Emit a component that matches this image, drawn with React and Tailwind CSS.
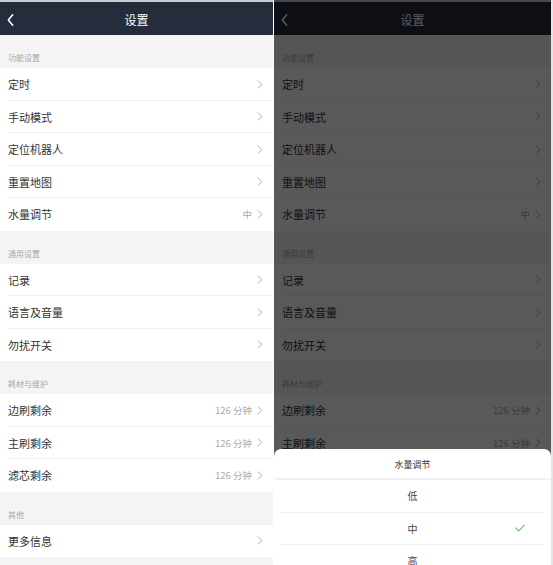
import React from 'react'

const font = { fontFamily: '"Noto Sans CJK SC", "Noto Sans", sans-serif' }

const sections = [
    {
        title: '功能设置',
        rows: [
            { label: '定时' },
            { label: '手动模式' },
            { label: '定位机器人' },
            { label: '重置地图' },
            { label: '水量调节', value: '中' },
        ],
    },
    {
        title: '通用设置',
        rows: [
            { label: '记录' },
            { label: '语言及音量' },
            { label: '勿扰开关' },
        ],
    },
    {
        title: '耗材与维护',
        rows: [
            { label: '边刷剩余', value: '126 分钟' },
            { label: '主刷剩余', value: '126 分钟' },
            { label: '滤芯剩余', value: '126 分钟' },
        ],
    },
    {
        title: '其他',
        rows: [{ label: '更多信息' }],
    },
]

const Chevron = ({ className }) => (
    <svg viewBox="0 0 6 10" className={className} fill="none" stroke="currentColor" strokeWidth="1.1" strokeLinecap="round" strokeLinejoin="round">
        <polyline points="1,1 5,5 1,9" />
    </svg>
)

const Screen = ({ width, headerBg }) => (
    <div className={`${width} h-full flex flex-col bg-[#f4f4f4] shrink-0`}>
        {/* header */}
        <div className={`h-[35px] shrink-0 ${headerBg} border-t-2 border-[#c9ccd2] relative flex items-center justify-center pt-[3px]`}>
            <svg viewBox="0 0 8 14" className="absolute left-[7px] top-[12px] w-[7px] h-[12px]" fill="none" stroke="white" strokeWidth="1.8" strokeLinecap="round" strokeLinejoin="round">
                <polyline points="6.5,1 1.5,7 6.5,13" />
            </svg>
            <span className="text-white text-[12px]">设置</span>
        </div>

        {sections.map(section => (
            <div key={section.title}>
                <div className="h-[33px] flex items-end pb-[4px] pl-[8px] text-[8px] text-[#a8a8a8]">
                    {section.title}
                </div>
                <div className="bg-white">
                    {section.rows.map((row, i) => (
                        <div key={row.label} className="h-[32.5px] pl-[8px] pr-[10px] flex items-center justify-between relative">
                            <span className="text-[11px] text-[#333]">{row.label}</span>
                            <span className="flex items-center gap-[5px] text-[#aaaaaa]">
                                {row.value && <span className="text-[9.5px]">{row.value}</span>}
                                <Chevron className="w-[6px] h-[9px]" />
                            </span>
                            {i < section.rows.length - 1 && (
                                <div className="absolute left-[8px] right-0 bottom-0 h-px bg-[#f0f0f0]"></div>
                            )}
                        </div>
                    ))}
                </div>
            </div>
        ))}
    </div>
)

const options = ['低', '中', '高']

export default function App() {
    return (
        <div className="w-[553px] h-[565px] overflow-hidden flex bg-white" style={font}>
            <Screen width="w-[273px]" headerBg="bg-[#252c3c]" />
            <div className="w-px bg-white shrink-0"></div>

            {/* right screen with overlay and bottom sheet */}
            <div className="relative w-[277px] h-full shrink-0 overflow-hidden">
                <Screen width="w-[277px]" headerBg="bg-[#252c3c]" />
                <div className="absolute inset-0 bg-black/65"></div>

                <div className="absolute left-0 right-0 top-[449px] bottom-0 bg-white rounded-t-[7px] flex flex-col">
                    <div className="h-[31px] shrink-0 flex items-center justify-center pt-[2px] text-[9px] text-[#333] border-b-2 border-[#f2f2f2]">
                        水量调节
                    </div>
                    {options.map(opt => (
                        <div key={opt} className="h-[32.5px] shrink-0 flex items-center justify-center relative border-b border-[#f0f0f0] mx-[6px]">
                            <span className="text-[10px] text-[#444]">{opt}</span>
                            {opt === '中' && (
                                <svg viewBox="0 0 12 9" className="absolute right-[20px] w-[10px] h-[8px]" fill="none" stroke="#6cc070" strokeWidth="1.3" strokeLinecap="round" strokeLinejoin="round">
                                    <polyline points="1,4.5 4.5,8 11,1" />
                                </svg>
                            )}
                        </div>
                    ))}
                </div>
            </div>
            <div className="w-[2px] bg-[#e6e6e6] shrink-0"></div>
        </div>
    )
}
